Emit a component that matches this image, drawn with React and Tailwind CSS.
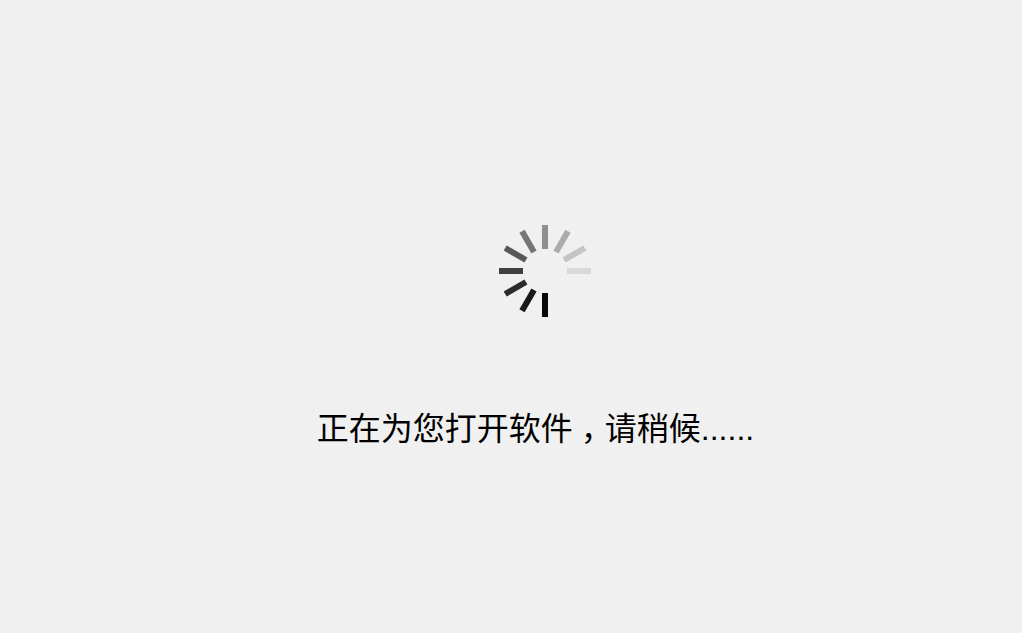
const bars = [
  { angle: 0, color: "#d9d9d9" },
  { angle: -30, color: "#c4c4c4" },
  { angle: -60, color: "#ababab" },
  { angle: -90, color: "#8f8f8f" },
  { angle: -120, color: "#767676" },
  { angle: -150, color: "#585858" },
  { angle: 180, color: "#404040" },
  { angle: 150, color: "#2b2b2b" },
  { angle: 120, color: "#181818" },
  { angle: 90, color: "#080808" },
];

const Spinner = () => {
  return (
    <svg width="92" height="92" viewBox="0 0 92 92" className="ml-[19px] block">
      {bars.map((bar) => (
        <rect
          key={bar.angle}
          x="68"
          y="43"
          width="24"
          height="6"
          fill={bar.color}
          transform={`rotate(${bar.angle} 46 46)`}
        />
      ))}
    </svg>
  );
};

export default function App() {
  return (
    <div className="h-[633px] w-full overflow-hidden bg-[#f0f0f0] pt-[225px] pl-[49px] flex flex-col items-center font-['Liberation_Sans','Noto_Sans_CJK_SC',sans-serif] text-black">
      <Spinner />
      <p className="mt-[88px] flex text-[32px] leading-[48px] whitespace-nowrap">
        <span>正在为您打开软件</span>
        <span className="w-[32px] overflow-hidden pl-[8px] tracking-[-8px]">，</span>
        <span>请稍候......</span>
      </p>
    </div>
  );
}
